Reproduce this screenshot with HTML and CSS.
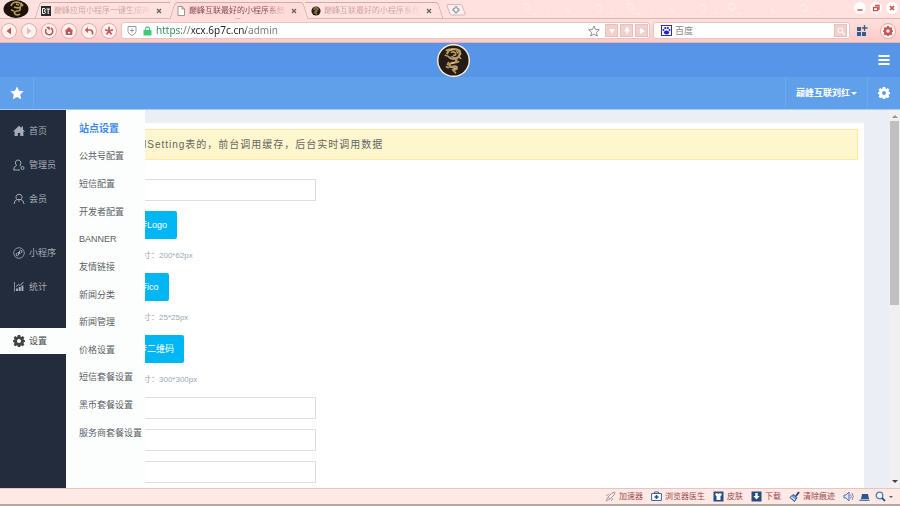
FILE: index.html
```html
<!DOCTYPE html>
<html lang="zh-CN">
<head>
<meta charset="utf-8">
<title>站点设置</title>
<link rel="stylesheet" href="styles.css">
</head>
<body>
<svg class="defs" aria-hidden="true">
  <symbol id="dragon" viewBox="0 0 32 32">
    <circle cx="16" cy="16" r="16" fill="#fdf0cf"/>
    <circle cx="16" cy="16" r="14.600" fill="#241a16"/>
    <g fill="none" stroke="#b99b62" stroke-linecap="round" stroke-linejoin="round">
      <path d="M10 9q1-4 6-4 6 0 6 4t-4 5q-3 1-6-1" stroke-width="2.200"/>
      <path d="M14 8q3-1 4 1t-2 2M22 6l1 4M9 6l3-1M8 11l3 1M21 12l2 2" stroke-width="1.500"/>
      <path d="M18 14q2 3-1 4-4 0-5 2 0 3 4 2 4-1 3 2-1 1-3 1" stroke-width="2.300"/>
      <path d="M11 18l-1 2M11 23l-2-1M15 25l3 3M19 18l2-1" stroke-width="1.500"/>
    </g>
    <path d="M13 6l3-1M19 7l1 2M14 12l3 1M14 19l3-1M16 23l2 1" stroke="#e6d099" fill="none"/>
  </symbol>
  <symbol id="gear" viewBox="0 0 12 12">
    <path fill="currentColor" fill-rule="evenodd" d="M4.800 0h2.400l.3 1.600 1 .4 1.300-.9 1.600 1.600-.9 1.300.4 1 1.100.2v1.800l-1.100.3-.4 1 .9 1.300-1.600 1.700-1.300-.9-1 .4-.3 1.200H4.800l-.3-1.200-1-.4-1.300.9L.600 9.600l.9-1.300-.4-1L0 7V5.200L1.100 5l.4-1-.9-1.300 1.600-1.600 1.300.9 1-.4zM6 4a2 2 0 1 0 0 4 2 2 0 0 0 0-4z"/>
  </symbol>
  <symbol id="close" viewBox="0 0 6 6"><path d="M1 1l4 4M5 1L1 5" stroke="currentColor" stroke-width="1.300"/></symbol>
</svg>

<header class="tabbar">
  <svg class="avatar" viewBox="0 0 26 18"><ellipse cx="13" cy="9" rx="12.500" ry="9" fill="#1d120c"/><path d="M8 6q1-4 6-4 5 1 4 4t-7 1M13 4l3 1M17 8q1 3-3 3-4 1-2 3t5 0M8 10l3 1M18 3l2 3" fill="none" stroke="#b59b5e" stroke-width="1.700"/></svg>
  <nav class="tabs">
    <div class="tab first">
      <svg class="fav" viewBox="0 0 10 10"><rect width="10" height="10" fill="#2c2c2c"/><path d="M1.500 2.500v5h2q1-.2 1-1.300T3 5q1.300 0 1.300-1.300T3 2.500zM5.500 3h3.500M7.200 3v5" fill="none" stroke="#fff"/></svg>
      <span class="tab-title">巅峰应用小程序一键生成神</span>
      <button class="tab-close" aria-label="关闭"><svg><use href="#close"/></svg></button>
    </div>
    <div class="tab active">
      <svg class="fav" viewBox="0 0 10 10"><path d="M2 .5h4l2.500 2.500v6.500H2zM6 .5V3h2.500" fill="#fff" stroke="#8b8080" stroke-width=".8"/></svg>
      <span class="tab-title">巅峰互联最好的小程序系统</span>
      <button class="tab-close" aria-label="关闭"><svg><use href="#close"/></svg></button>
    </div>
    <div class="tab last">
      <svg class="fav"><use href="#dragon"/></svg>
      <span class="tab-title">巅峰互联最好的小程序系统</span>
      <button class="tab-close" aria-label="关闭"><svg><use href="#close"/></svg></button>
    </div>
    <button class="tab-new" aria-label="新标签"><svg viewBox="0 0 20 12"><path d="M2 .5h12q1.500 0 2 1l3 8q.3 1.500-1 1.500H6q-1.500 0-2-1L1 2Q.6.6 2 .5z" fill="#ffeeec" stroke="#c9aaaa" stroke-width=".8"/><path d="M9 2.800h2v2h2v2h-2v2H9v-2H7v-2h2z" fill="#fff" stroke="#67799a" stroke-width=".8"/></svg></button>
  </nav>
  <svg class="swirls" viewBox="0 0 290 18"><g fill="none" stroke="#fff1ef"><path id="sw" d="M8 5q6-3 7 2 0 4-4 3-3-1-1-3M17 13l4 2M50 10q4-2 4 1t-3 1M31 13h2M80 6q6-3 7 2 0 4-4 3M96 13h3"/><use href="#sw" x="104"/><use href="#sw" x="205"/></g></svg>
  <div class="window-buttons">
    <button aria-label="最小化"><svg viewBox="0 0 12 12"><path d="M3.500 8h5" stroke="#c9544f" stroke-width="1.500"/></svg></button>
    <button aria-label="还原"><svg viewBox="0 0 12 12"><path d="M5 3.500h4v3.500H7.500M3.500 5.500h4v3.200h-4z" fill="none" stroke="#c9544f" stroke-width="1.300"/></svg></button>
    <button aria-label="关闭窗口"><svg viewBox="0 0 12 12"><path d="M4 4l4 4M8 4L4 8" stroke="#c9544f" stroke-width="1.700"/></svg></button>
  </div>
</header>

<div class="toolbar">
  <div class="nav-buttons">
    <button class="round" aria-label="后退"><svg viewBox="0 0 10 10"><path d="M7 1.500v7L2.500 5z" fill="currentColor"/></svg></button>
    <button class="round dim" aria-label="前进"><svg viewBox="0 0 10 10"><path d="M3 1.500v7L7.500 5z" fill="currentColor"/></svg></button>
    <button class="round" aria-label="刷新"><svg viewBox="0 0 10 10"><path d="M6.800 2A3.600 3.600 0 1 1 2.300 3" fill="none" stroke="currentColor" stroke-width="1.600"/><path d="M1.800.8h4v3.700z" fill="currentColor"/></svg></button>
    <button class="round" aria-label="主页"><svg viewBox="0 0 10 10"><path d="M5 1l4.500 4.300H8.300V9H1.700V5.300H.5zM4 6v1.500h2V6z" fill="currentColor" fill-rule="evenodd"/></svg></button>
    <button class="round" aria-label="撤销"><svg viewBox="0 0 10 10"><path d="M.8 4L4 1v6z" fill="currentColor"/><path d="M3 4h3q2.500 0 2.500 2.500v2" fill="none" stroke="currentColor" stroke-width="1.600"/></svg></button>
    <button class="round" aria-label="收藏"><svg viewBox="0 0 10 10"><path d="M5 5V.8M5 5L1 3.700M5 5l4-1.300M5 5L2.500 8.500M5 5l2.500 3.500" stroke="currentColor" stroke-width="1.700"/></svg></button>
  </div>
  <div class="address">
    <svg class="shield" viewBox="0 0 10 12"><path d="M1 1.500h8v5Q8 9.500 5 10.500 2 9.500 1 6.500zM5 3.500v4M3 5.500h4" fill="none" stroke="#9c9c9c"/></svg>
    <svg class="lock" viewBox="0 0 9 10"><path d="M2.500 5V3a2 2 0 0 1 4 0v2" fill="none" stroke="#67c48c" stroke-width="1.300"/><rect x=".5" y="4" width="8" height="5.500" rx=".5" fill="#3fcb78"/></svg>
    <input class="url" type="text" aria-label="地址" value="https://xcx.6p7c.cn/admin">
    <button class="fav-star" aria-label="收藏此页"><svg viewBox="0 0 12 12"><path d="M6 1l1.500 3.500 3.800.3-2.900 2.500.9 3.700L6 9l-3.300 2 .9-3.700L.7 4.800l3.800-.3z" fill="#fff" stroke="#777" stroke-width=".8"/></svg></button>
    <button class="chip" aria-label="下拉"><svg viewBox="0 0 10 10"><path d="M2 3h6L5 7.500z" fill="#fff"/></svg></button>
    <button class="chip" aria-label="加速"><svg viewBox="0 0 10 10"><path d="M4 1.500h3L6 4h2L4 8.700 4.700 5.500H2.500z" fill="#fff"/></svg></button>
    <button class="chip" aria-label="前往"><svg viewBox="0 0 10 10"><path d="M3 2v6l5-3z" fill="#fff"/></svg></button>
  </div>
  <div class="search">
    <svg class="paw" viewBox="0 0 11 11"><rect width="11" height="11" fill="#2929e8"/><rect x="1" y="1" width="9" height="9" fill="#fff"/><g fill="#1d1de4"><ellipse cx="5.500" cy="7.500" rx="2.600" ry="2"/><circle cx="2.500" cy="5" r="1"/><circle cx="4.300" cy="3" r="1.100"/><circle cx="6.800" cy="3" r="1.100"/><circle cx="8.500" cy="5" r="1"/></g></svg>
    <input class="query" type="text" aria-label="搜索" placeholder="百度">
    <button class="chip" aria-label="搜索"><svg viewBox="0 0 10 10"><circle cx="4.300" cy="4.300" r="2.300" fill="none" stroke="#fff"/><path d="M6 6l2.500 2.500" stroke="#fff" stroke-width="1.300"/></svg></button>
  </div>
  <button class="apps" aria-label="扩展"><svg viewBox="0 0 12 12"><path d="M1 2h4v4H1zM1 7h4v4H1zM6 7h4v4H6z" fill="#345c97"/><path d="M8.500 0v6M5.800 3h5.700" stroke="#345c97" stroke-width="1.300"/></svg></button>
  <button class="round settings" aria-label="浏览器设置"><svg><use href="#gear"/></svg></button>
</div>

<div class="page">
  <header class="brandbar">
    <svg class="logo" role="img" aria-label="Logo"><use href="#dragon"/></svg>
    <button class="burger" aria-label="菜单"><svg viewBox="0 0 12 12"><path d="M.5 2h11M.5 6h11M.5 10h11" stroke="#fff" stroke-width="2"/></svg></button>
  </header>
  <div class="userbar">
    <button class="star" aria-label="收藏"><svg viewBox="0 0 14 14"><path d="M7 .5l2 4.300 4.700.5-3.500 3.200 1 4.800L7 11l-4.200 2.300 1-4.800L.3 5.300 5 4.800z" fill="#fff"/></svg></button>
    <button class="user">巅峰互联刘红<i class="caret"></i></button>
    <button class="cog" aria-label="设置"><svg><use href="#gear"/></svg></button>
  </div>
  <div class="workspace">
    <nav class="sidebar">
      <a href="#"><svg viewBox="0 0 12 12"><path d="M6 .8L0 6.500h1.600V11h3.200V8h2.400v3h3.200V6.500H12l-2-2V1.500H8.500V3z" fill="currentColor"/></svg>首页</a>
      <a href="#"><svg viewBox="0 0 12 12"><path d="M7 11H.6q0-3.500 3-4.600Q2 5 2.500 3T5 1t2.800 2-1 3.400l1 .6" fill="none" stroke="currentColor"/><circle cx="9.500" cy="9" r="1.500" fill="none" stroke="#8bbcae"/></svg>管理员</a>
      <a href="#"><svg viewBox="0 0 12 12"><path d="M1 11q.3-3.500 3-4.500Q2.800 5.500 3 3.600 3.500 1.200 6 1.200T9 3.600Q9.200 5.500 8 6.500q2.700 1 3 4.500M4 6.500h4M6 7v2" fill="none" stroke="currentColor"/></svg>会员</a>
      <a href="#" class="group"><svg viewBox="0 0 12 12"><circle cx="6" cy="6" r="5.300" fill="none" stroke="currentColor" stroke-width=".8"/><path d="M5.500 5v3q-1 1.500-2.300.3Q2.500 6.500 4.500 6M6.500 7V4q1-1.500 2.300-.3Q9.500 5.500 7.500 6" fill="none" stroke="currentColor"/></svg>小程序</a>
      <a href="#"><svg viewBox="0 0 12 12"><path d="M1.500 1v9.500" fill="none" stroke="currentColor" stroke-width=".8"/><path d="M3 7.500h2V10H3zM5.700 6h2v4h-2zM8.400 4.500h2V10h-2z" fill="currentColor"/><path d="M3 5.500l2.500-2L7 4.500 10.500 1" fill="none" stroke="currentColor"/></svg>统计</a>
      <a href="#" class="group current"><svg><use href="#gear"/></svg>设置</a>
    </nav>
    <div class="stage">
      <nav class="submenu">
        <a href="#" class="current">站点设置</a>
        <a href="#">公共号配置</a>
        <a href="#">短信配置</a>
        <a href="#">开发者配置</a>
        <a href="#">BANNER</a>
        <a href="#">友情链接</a>
        <a href="#">新闻分类</a>
        <a href="#">新闻管理</a>
        <a href="#">价格设置</a>
        <a href="#">短信套餐设置</a>
        <a href="#">黑币套餐设置</a>
        <a href="#">服务商套餐设置</a>
      </nav>
      <main class="card">
        <p class="notice">lSetting表的，前台调用缓存，后台实时调用数据</p>
        <form class="fields">
          <input type="text" aria-label="网站名称">
          <button type="button">上传Logo</button>
          <small>建议尺寸：200*62px</small>
          <button type="button">上传ico</button>
          <small>建议尺寸：25*25px</small>
          <button type="button">上传二维码</button>
          <small>建议尺寸：300*300px</small>
          <input type="text" aria-label="标题">
          <input type="text" aria-label="关键词">
          <input type="text" aria-label="描述">
        </form>
      </main>
    </div>
    <div class="scrollbar"><i class="up"></i><div class="thumb"></div><i class="down"></i></div>
  </div>
</div>

<footer class="statusbar">
  <button><svg viewBox="0 0 11 11"><path d="M1 10l2-4 4-4 3-1-1 3-4 4zM1 5l3-2M6 10l2-3M3 6l2 2" fill="none" stroke="#aaa0a0"/></svg>加速器</button>
  <button><svg viewBox="0 0 11 11"><path d="M.6 2.500h9.800v7H.6zM3.500 2V1h4v1" fill="#fff" stroke="#3a649f"/><path d="M5.500 4v4M3.500 6h4" stroke="#274f8c" stroke-width="1.500"/></svg>浏览器医生</button>
  <button><svg viewBox="0 0 11 11"><rect x=".5" y=".5" width="10" height="10" fill="#284b80"/><path d="M2 3l2-1q1.500 1.500 3 0l2 1-1 2H7.500v4h-4V5H3z" fill="#fff"/></svg>皮肤</button>
  <button><svg viewBox="0 0 11 11"><rect x=".5" y=".5" width="10" height="10" fill="#284b80"/><path d="M4.300 2h2.400v3h2L5.500 8.500 2.300 5h2z" fill="#fff"/></svg>下载</button>
  <button><svg viewBox="0 0 11 11"><path d="M10 1L7 5" stroke="#284b80" stroke-width="2"/><path d="M4 3.500l4 3-2.500 4L1 6.500z" fill="#7ea4d6" stroke="#284b80"/><path d="M2 6l4 3" stroke="#fff"/></svg>清除痕迹</button>
  <div class="tray">
    <button aria-label="声音"><svg viewBox="0 0 11 11"><path d="M1 4h2l3-3v9L3 7H1z" fill="#dce8f7" stroke="#5275a8"/><path d="M7.500 3.500q1.500 2 0 4M9 2q2.500 3.500 0 7" fill="none" stroke="#7090bd"/></svg></button>
    <button aria-label="窗口"><svg viewBox="0 0 11 11"><path d="M3 3h6l1 5H2z" fill="#2d5893"/><path d="M.5 8.500h10v1.500H.5z" fill="#5479ad"/></svg></button>
    <button aria-label="缩放"><svg viewBox="0 0 11 11"><circle cx="4.500" cy="4.500" r="3.300" fill="#fff" stroke="#4879b8" stroke-width="1.300"/><path d="M7 7l3 3" stroke="#31578f" stroke-width="1.800"/></svg><i class="caret"></i></button>
  </div>
</footer>
</body>
</html>
```
FILE: styles.css
```css
* { box-sizing: border-box; }

body {
  margin: 0;
  height: 100vh;
  display: flex;
  flex-direction: column;
  overflow: hidden;
  background: #fff;
  color: #666;
  font: 9px/14px "Liberation Sans", "Noto Sans CJK SC", sans-serif;
}

button, input { font: inherit; color: inherit; border: 0; padding: 0; margin: 0; background: none; }
a { color: inherit; text-decoration: none; }
svg { display: block; flex: none; }
.defs { width: 0; height: 0; position: absolute; }

.caret {
  border: 3px solid transparent;
  border-top-color: currentColor;
  border-bottom: 0;
}

/* Browser tabs */
.tabbar {
  flex: none;
  height: 19px;
  display: flex;
  background: #ffe2df;
  border-bottom: 1px solid #d6b8b6;
}
.avatar { width: 26px; height: 18px; margin: 0 6px 0 3px; }
.tabs { position: relative; z-index: 0; display: flex; height: 19px; padding-top: 2px; }
.tab {
  position: relative;
  width: 135px;
  padding: 0 8px 0 2px;
  display: flex;
  align-items: center;
  gap: 3px;
  color: #cfa5a5;
  font-size: 8px;
}
.tab::before, .tab::after {
  content: "";
  position: absolute;
  z-index: -1;
  top: 0;
  bottom: 0;
  border-top: 1px solid #ccafad;
}
.tab::before { left: 0; right: 50%; }
.tab::after { left: 50%; right: 0; }
.tab.first::before, .tab.active::before {
  left: 2px;
  border-left: 1px solid #ccafad;
  border-radius: 3px 0 0 0;
  transform: skewX(-18deg);
}
.tab.active::after, .tab.last::after {
  border-right: 1px solid #ccafad;
  border-radius: 0 3px 0 0;
  transform: skewX(18deg);
}
.tab.active { color: #8d4b5c; }
.tab.active::before, .tab.active::after { background: #ffdcd9; }
.fav { width: 10px; height: 10px; margin-left: 4px; }
.tab-title {
  flex: 1;
  white-space: nowrap;
  overflow: hidden;
  mask-image: linear-gradient(90deg, #000 75%, transparent);
}
.tab-close { color: #665; }
.tab-close svg { width: 6px; height: 6px; }
.tab-new { margin-left: 6px; align-self: flex-start; padding-top: 2px; }
.tab-new svg { width: 20px; height: 12px; }
.swirls { flex: 1; min-width: 0; height: 18px; }
.window-buttons { display: flex; gap: 4px; padding: 2px 2px 0 0; align-items: flex-start; }
.window-buttons button { border-radius: 50%; background: #fff; }
.window-buttons svg { width: 12px; height: 12px; }

/* Browser toolbar */
.toolbar {
  flex: none;
  height: 24px;
  display: flex;
  align-items: center;
  padding: 0 4px 0 1px;
  background: linear-gradient(#ffdfdc, #fdcbc8);
  border-bottom: 1px solid #e5b2b8;
}
.nav-buttons { display: flex; gap: 4px; margin-right: 4px; }
.round {
  width: 16px;
  height: 16px;
  display: grid;
  place-items: center;
  border-radius: 50%;
  background: #fff2f0;
  border: 1px solid #dcaead;
  color: #c2585a;
}
.round svg { width: 10px; height: 10px; }
.round.dim { color: #e9bab8; }
.address, .search {
  height: 17px;
  display: flex;
  align-items: center;
  background: #fff;
  border: 1px solid #ecc4c1;
  border-radius: 3px;
}
.address { flex: 1; min-width: 0; padding: 0 1px 0 5px; }
.shield { width: 10px; height: 12px; margin-right: 6px; }
.lock { width: 9px; height: 10px; margin-right: 4px; }
.url {
  flex: 1;
  min-width: 0;
  font: 10px/15px "Noto Sans", sans-serif;
  color: transparent;
  background: linear-gradient(90deg, #318a62 26px, #777 26px 36px, #222 36px 90px, #777 90px) text;
}
.fav-star svg { width: 12px; height: 12px; margin-right: 3px; }
.chip { width: 13px; height: 13px; margin-left: 2px; display: grid; place-items: center; background: #f3cfcd; border: 1px solid #e9c0bd; }
.chip svg { width: 10px; height: 10px; }
.search { width: 22%; margin-left: 3px; padding: 0 2px 0 7px; }
.paw { width: 11px; height: 11px; margin-right: 3px; }
.query { flex: 1; min-width: 0; }
.query::placeholder { color: #888; opacity: 1; }
.apps { margin: 0 12px 0 6px; }
.apps svg { width: 12px; height: 12px; }

/* Site header */
.page { flex: 1; min-height: 0; display: flex; flex-direction: column; }
.brandbar {
  flex: none;
  height: 34px;
  display: grid;
  grid-template-columns: 1fr auto 1fr;
  align-items: center;
  padding: 0 10px;
  background: #5795e8;
}
.logo { grid-column: 2; width: 33px; height: 33px; margin-left: 6px; }
.burger { justify-self: end; }
.burger svg { width: 12px; height: 12px; }
.userbar {
  flex: none;
  height: 33px;
  display: flex;
  background: #60a0ea;
  color: #fff;
  border-bottom: 1px solid #a9caf0;
}
.star { width: 34px; margin-right: auto; display: grid; place-items: center; border-right: 1px solid #6da8ed; }
.star svg { width: 14px; height: 14px; }
.user {
  display: flex;
  align-items: center;
  gap: 1px;
  padding: 0 10px;
  font-weight: bold;
  border: solid #6da8ed;
  border-width: 0 1px;
}
.cog { width: 32px; display: grid; place-items: center; }
.cog svg { width: 12px; height: 12px; }

/* Navigation */
.workspace { flex: 1; min-height: 0; display: flex; }
.sidebar {
  flex: none;
  width: 66px;
  padding-top: 8px;
  display: flex;
  flex-direction: column;
  gap: 8px;
  background: #232c3d;
  color: #a4abb5;
}
.sidebar a { height: 26px; display: flex; align-items: center; gap: 4px; padding-left: 13px; }
.sidebar svg { width: 12px; height: 12px; }
.sidebar .group { margin-top: 20px; }
.sidebar .current { background: #fbfefd; color: #444; }
.stage { position: relative; flex: 1; min-width: 0; overflow: hidden; padding: 13px 25px 0 14px; background: #ebeff5; }
.submenu {
  position: absolute;
  z-index: 1;
  top: 0;
  bottom: 0;
  left: 0;
  width: 79px;
  padding: 5px 0 0 13px;
  display: grid;
  grid-template-rows: repeat(12, minmax(0, 2fr)) minmax(0, 3fr);
  align-items: center;
  white-space: nowrap;
  background: #fbfefd;
  color: #5b5f68;
}
.submenu .current { color: #3f8ae8; font-size: 10px; font-weight: bold; }

/* Settings form */
.card { height: 100%; padding: 6px; background: #fff; }
.notice {
  margin: 0 0 19px;
  padding: 8px 57px;
  height: 31px;
  border: 1px solid #faeaa5;
  background: #fef6cd;
  font-size: 10px;
  letter-spacing: 1px;
}
.fields { display: flex; flex-direction: column; align-items: flex-start; gap: 10px; padding-left: 33px; }
.fields input { width: 197px; height: 22px; flex: none; border: 1px solid #dedfe2; background: #fff; padding: 0 4px; }
.fields button { height: 28px; padding: 0 10px; border-radius: 2px; background: #00b7f3; color: #fff; }
.fields small { font-size: 8px; color: #9ba8b4; }

.scrollbar {
  flex: none;
  width: 11px;
  display: flex;
  flex-direction: column;
  align-items: center;
  padding: 5px 0;
  gap: 3px;
  background: #f0f0f1;
}
.scrollbar i { border: 0 solid transparent; border-width: 0 3px; }
.scrollbar .up { border-bottom: 3px solid #a09090; }
.scrollbar .down { border-top: 3px solid #444; margin-top: auto; }
.thumb { width: 9px; height: 50%; background: #c1c0c0; }

/* Status bar */
.statusbar {
  flex: none;
  height: 18px;
  display: flex;
  justify-content: flex-end;
  align-items: center;
  gap: 8px;
  padding-right: 7px;
  background: #ffe9e7;
  border-top: 1px solid #eec3bf;
  border-bottom: 2px solid #b9a59b;
  color: #9b4a4a;
  font-size: 8px;
}
.statusbar button { display: flex; align-items: center; gap: 3px; }
.statusbar svg { width: 11px; height: 11px; }
.statusbar .caret { border-width: 2px 2px 0; color: #567; }
.tray { display: flex; gap: 5px; }
```
